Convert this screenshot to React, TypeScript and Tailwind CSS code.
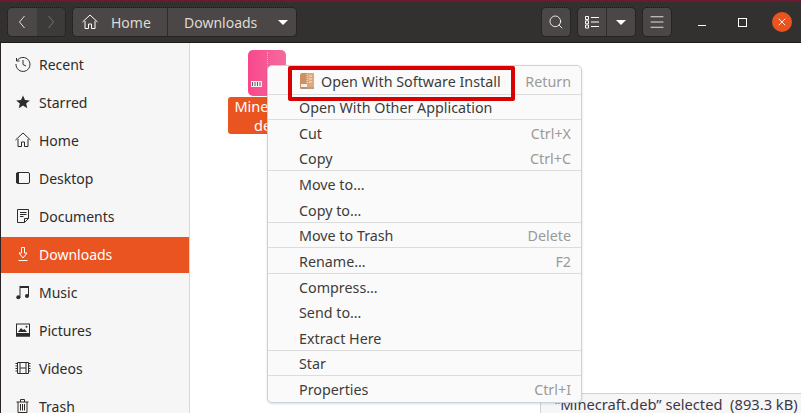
import { Menu, Search, X } from "lucide-react";
import type { ReactNode } from "react";

const SANS = "font-['Noto_Sans','Open_Sans',sans-serif]";

function Stroke({ children }: { children: ReactNode }) {
  return (
    <svg width="16" height="16" viewBox="0 0 16 16" fill="none" stroke="currentColor" strokeWidth="1">
      {children}
    </svg>
  );
}

const SIDEBAR = [
  {
    label: "Recent",
    icon: (
      <Stroke>
        <path d="M2.2 4.5A7 7 0 1 1 1 8" />
        <path d="M1.5 2v3h3M8 4v4.5l3 1.5" />
      </Stroke>
    ),
  },
  {
    label: "Starred",
    icon: (
      <svg width="16" height="16" viewBox="0 0 16 16" fill="currentColor">
        <path d="M8 1.5l2 4.4 4.8.5-3.6 3.2 1 4.7L8 11.4l-4.2 2.9 1-4.7L1.2 6.400l4.800-.5z" />
      </svg>
    ),
  },
  {
    label: "Home",
    icon: (
      <Stroke>
        <path d="M.5 8L8 1l7.500 7M3 7v7.500h3.500V10h3v4.500H13V7" />
      </Stroke>
    ),
  },
  {
    label: "Desktop",
    icon: (
      <svg width="16" height="16" viewBox="0 0 16 16" fill="none" stroke="currentColor">
        <rect x="1.500" y="2.500" width="13" height="11" rx="1.500" />
        <path d="M1 3h3v10H1z" fill="currentColor" stroke="none" />
      </svg>
    ),
  },
  {
    label: "Documents",
    icon: (
      <Stroke>
        <path d="M2.500 1.500h11v9l-4 4h-7zM9.500 14.500v-4h4M5 4.500h6.500M5 6.500h6.500M5 8.500h3.500" />
      </Stroke>
    ),
  },
  {
    label: "Downloads",
    active: true,
    icon: (
      <Stroke>
        <path d="M6.500 1.500h3V7H12l-4 5-4-5h2.500zM3.500 14.500h9" />
      </Stroke>
    ),
  },
  {
    label: "Music",
    icon: (
      <svg width="16" height="16" viewBox="0 0 16 16" fill="currentColor">
        <path d="M4.500 2H14v10h-1V4H5.500v9.500h-1z" />
        <circle cx="3.300" cy="13.300" r="2" />
        <circle cx="12" cy="12" r="2" />
      </svg>
    ),
  },
  {
    label: "Pictures",
    icon: (
      <svg width="16" height="16" viewBox="0 0 16 16" fill="currentColor">
        <path d="M1 1.500h14v13H1zM2 2.500V11h12V2.500z" fillRule="evenodd" />
        <path d="M3 10l3-4 2 2 1.500-1L12 10z" />
        <circle cx="11.500" cy="4.800" r="1" />
        <rect x="1" y="11" width="14" height="3.500" />
      </svg>
    ),
  },
  {
    label: "Videos",
    icon: (
      <Stroke>
        <path d="M2.500 2.500h11v11h-11zM5 2.500v11M11 2.500v11M5 8h6M.5 3.500h2M.5 6h2M.5 8.500h2M.5 11h2M13.500 3.500h2M13.500 6h2M13.500 8.500h2M13.500 11h2" />
      </Stroke>
    ),
  },
  {
    label: "Trash",
    icon: (
      <Stroke>
        <path d="M1.500 4h12M5.500 4V1.500h4V4M3 4v10.500h9V4M5.500 6v6.500M7.500 6v6.500M9.500 6v6.500" />
      </Stroke>
    ),
  },
];

type MenuRow = { label: string; hint?: string; icon?: boolean; divider?: boolean };

const MENU: MenuRow[] = [
  { label: "Open With Software Install", hint: "Return", icon: true, divider: true },
  { label: "Open With Other Application", divider: true },
  { label: "Cut", hint: "Ctrl+X" },
  { label: "Copy", hint: "Ctrl+C", divider: true },
  { label: "Move to…" },
  { label: "Copy to…", divider: true },
  { label: "Move to Trash", hint: "Delete", divider: true },
  { label: "Rename…", hint: "F2", divider: true },
  { label: "Compress…" },
  { label: "Send to…" },
  { label: "Extract Here", divider: true },
  { label: "Star", divider: true },
  { label: "Properties", hint: "Ctrl+I" },
];

const BUTTON = "h-[28px] rounded-[4px] bg-[#4a4746] outline-1 outline-dotted outline-[#1a1918]";

function Caret() {
  return <div className="h-0 w-0 border-x-[5px] border-t-[5px] border-x-transparent border-t-white" />;
}

function ArchiveIcon() {
  return (
    <svg width="14" height="16" viewBox="0 0 14 16" className="mr-[7px] shrink-0">
      <rect x="0" y="0" width="14" height="16" rx="2" fill="#d08f60" />
      <rect x="7" y="0" width="7" height="16" fill="#e0a77c" />
      <path d="M7 1v10" stroke="#f4e4d4" strokeWidth="1" strokeDasharray="1 1" />
      <path d="M9 3h3M9 6h3M9 9h3" stroke="#f4e4d4" strokeWidth="1" />
      <rect x="1" y="11" width="6" height="3" fill="#f4efe8" />
      <path d="M0 15h14" stroke="#9a9088" strokeWidth="1" />
    </svg>
  );
}

export default function App() {
  return (
    <div className={`relative flex h-[413px] w-[801px] flex-col overflow-hidden bg-white ${SANS}`}>
      <div className="h-[2px] shrink-0 bg-[#6e1a2e]" />
      <header className="flex h-[41px] shrink-0 items-center border-b border-[#1d1c1b] bg-[#333130] pl-2 text-[14px] text-[#dfdbd2]">
        <div className={`flex w-[57px] ${BUTTON}`}>
          <div className="flex flex-1 items-center justify-center text-[#e4e1dc]">
            <svg width="10" height="16" viewBox="0 0 10 16" fill="none" stroke="currentColor">
              <path d="M7.500 2L2.500 8l5 6" />
            </svg>
          </div>
          <div className="flex flex-1 items-center justify-center rounded-r-[4px] bg-[#3d3b3a] text-[#74716f]">
            <svg width="10" height="16" viewBox="0 0 10 16" fill="none" stroke="currentColor">
              <path d="M2.500 2l5 6-5 6" />
            </svg>
          </div>
        </div>
        <div className={`ml-[8px] flex w-[223px] ${BUTTON}`}>
          <div className="flex w-[95px] items-center border-r border-[#2f2d2c] pl-[9px]">
            <div className="text-white">
              <Stroke>
                <path d="M.5 8L8 1l7.500 7M3 7v7.500h3.500V10h3v4.500H13V7" />
              </Stroke>
            </div>
            <span className="ml-[13px]">Home</span>
          </div>
          <div className="flex flex-1 items-center pl-4">
            <span>Downloads</span>
            <div className="ml-auto mr-[8px]">
              <Caret />
            </div>
          </div>
        </div>
        <div className="ml-auto flex items-center">
          <div className={`flex w-7 items-center justify-center ${BUTTON}`}>
            <Search size={16} color="#fff" strokeWidth={1.300} />
          </div>
          <div className={`ml-2 flex w-[57px] ${BUTTON}`}>
            <div className="flex w-[29px] items-center justify-center border-r border-[#2f2d2c] text-white">
              <Stroke>
                <path d="M1.500 2.500h3v3h-3zM1.500 6.800h3v3h-3zM1.500 11h3v3h-3zM7 3.500h8M7 8h8M7 12.500h8" />
              </Stroke>
            </div>
            <div className="flex flex-1 items-center justify-center">
              <Caret />
            </div>
          </div>
          <div className={`ml-2 flex w-7 items-center justify-center ${BUTTON}`}>
            <Menu size={18} color="#fff" strokeWidth={1.100} />
          </div>
          <div className="ml-[27px] mt-[7px] h-[1.500px] w-[8px] bg-white" />
          <div className="ml-[32px] h-[9px] w-[9px] border-[1.500px] border-white" />
          <div className="ml-[25px] mr-[9px] flex h-5 w-5 items-center justify-center rounded-full bg-[#e95420]">
            <X size={12} color="#fff" strokeWidth={1.800} />
          </div>
        </div>
      </header>

      <div className="flex min-h-0 flex-1">
        <aside className="flex w-[190px] shrink-0 flex-col border-r border-l border-r-[#d8d8d7] border-l-[#2a2224] bg-[#f6f6f6] pt-[3px] text-[14px] text-[#2e2c2b]">
          {SIDEBAR.map((item) => (
            <div
              key={item.label}
              className={`my-px flex h-[36px] shrink-0 items-center pb-[2px] pl-[14px] ${item.active ? "bg-[#e95420] text-white" : ""}`}
            >
              <span className="flex w-4 items-center justify-center">{item.icon}</span>
              <span className="ml-[8px]">{item.label}</span>
            </div>
          ))}
        </aside>

        <main className="relative flex-1">
          <div className="ml-[38px] mt-[7px] flex w-[78px] flex-col items-center">
            <div className="relative h-[46px] w-[38px] rounded-[5px] bg-gradient-to-r from-[#f8478c] to-[#f56a9e]">
              <div className="absolute inset-y-[2px] left-[19px] border-l border-dotted border-[#e8b09a]" />
              <svg width="11" height="6" viewBox="0 0 11 6" className="absolute bottom-[9px] left-[3px]">
                <rect width="11" height="6" fill="#f7efee" />
                <path d="M1.500 1v4M4 1v4M6.500 1v4M9 1v4" stroke="#6d5a5e" strokeWidth="1" />
              </svg>
            </div>
            <div className="mt-[1px] h-[37px] w-full rounded-[3px] bg-[#e95420] text-center text-[14.500px] leading-[19px] text-white">
              Minecraft
              <br />
              deb
            </div>
          </div>
        </main>
      </div>

      <div className="absolute bottom-0 right-0 flex h-[20px] w-[261px] items-center border-l border-t border-[#d0d0d0] bg-[#f6f6f6] pl-[14px] pt-[2px] text-[14.700px] text-[#3d3846]">
        <span className="whitespace-pre">“Minecraft.deb” selected  (893.3 kB)</span>
      </div>

      <div className="absolute left-[267px] top-[65px] w-[315px] rounded-[5px] border border-[#c9d3de] bg-[#fafafa] pt-[3px] text-[14.300px] text-[#3d3c3a] shadow-sm">
        {MENU.map((row) => (
          <div
            key={row.label}
            className={`flex h-[25.600px] items-center pr-[10px] ${row.icon ? "pl-[32px]" : "pl-[31px] pt-[2px]"} ${row.divider ? "border-b border-[#dcdcdc]" : ""}`}
          >
            {row.icon && <ArchiveIcon />}
            <span>{row.label}</span>
            {row.hint && <span className="ml-auto text-[#9a9a98]">{row.hint}</span>}
          </div>
        ))}
      </div>

      <div className="absolute left-[288px] top-[66px] h-[35px] w-[227px] rounded-[2px] border-4 border-[#d80000]" />
    </div>
  );
}
